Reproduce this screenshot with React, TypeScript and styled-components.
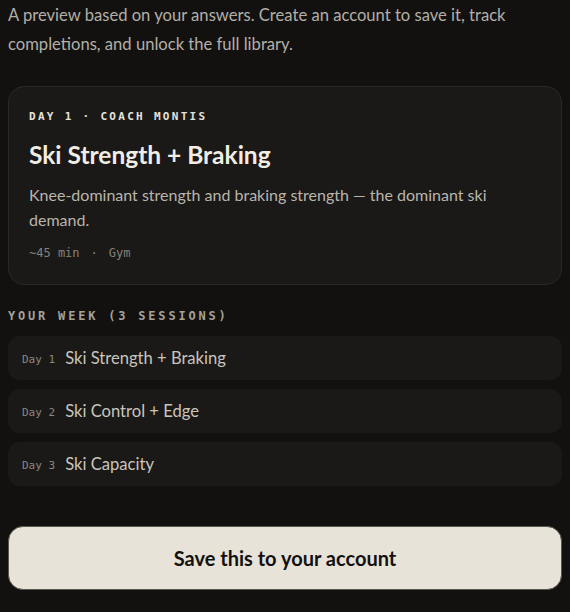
import React from "react";
import styled, { createGlobalStyle } from "styled-components";

const Global = createGlobalStyle`
  html, body { margin: 0; padding: 0; background: #121110; }
  body { font-family: Lato, "Noto Sans", sans-serif; -webkit-font-smoothing: antialiased; }
`;

const mono = `"DejaVu Sans Mono", "Liberation Mono", monospace`;

const Page = styled.main`
  width: 570px;
  box-sizing: border-box;
  padding: 1px 8px 22px;
  display: flex;
  flex-direction: column;
`;

const Intro = styled.p`
  margin: 0;
  font-size: 16.6px;
  line-height: 29px;
  color: #b3afa7;
`;

const Card = styled.section`
  margin-top: 27px;
  background: #1a1918;
  border: 1px solid #2a2826;
  border-radius: 16px;
  padding: 22px 20px 22px;
  display: flex;
  flex-direction: column;
`;

const Eyebrow = styled.div`
  font-family: ${mono};
  font-weight: 700;
  font-size: 11px;
  letter-spacing: 2.3px;
  color: #e6e2d8;
  line-height: 16px;
`;

const Title = styled.h2`
  margin: 15px 0 0;
  font-size: 24.5px;
  line-height: 30px;
  font-weight: 700;
  color: #f1ede4;
`;

const Desc = styled.p`
  margin: 12px 0 0;
  font-size: 16px;
  line-height: 25px;
  color: #b9b5ad;
`;

const Meta = styled.div`
  margin-top: 12px;
  font-family: ${mono};
  font-size: 12px;
  color: #85817a;
  display: flex;
  gap: 11px;
  line-height: 18px;
`;

const SectionLabel = styled.h3`
  margin: 22px 0 0;
  font-family: ${mono};
  font-weight: 700;
  font-size: 12px;
  letter-spacing: 2.8px;
  color: #a6a29a;
  line-height: 18px;
`;

const List = styled.ul`
  list-style: none;
  margin: 11px 0 0;
  padding: 0;
  display: flex;
  flex-direction: column;
  gap: 9px;
`;

const Row = styled.li`
  height: 44px;
  box-sizing: border-box;
  background: #1a1918;
  border-radius: 12px;
  padding: 0 14px;
  display: flex;
  align-items: center;
  gap: 10px;
`;

const DayTag = styled.span`
  font-family: ${mono};
  font-size: 11px;
  color: #8b877f;
  padding-top: 2px;
`;

const RowTitle = styled.span`
  font-size: 16.6px;
  color: #c9c5bd;
`;

const SaveButton = styled.button`
  margin-top: 40px;
  height: 64px;
  border: 1px solid #5a5750;
  border-radius: 15px;
  background: #e8e3d8;
  color: #121110;
  font-family: Lato, "Noto Sans", sans-serif;
  font-weight: 700;
  font-size: 20px;
  cursor: pointer;
`;

const sessions = [
  { day: 1, title: "Ski Strength + Braking" },
  { day: 2, title: "Ski Control + Edge" },
  { day: 3, title: "Ski Capacity" },
];

export default function App() {
  return (
    <>
      <Global />
      <Page>
        <Intro>
          A preview based on your answers. Create an account to save it, track
          completions, and unlock the full library.
        </Intro>
        <Card>
          <Eyebrow>DAY 1 · COACH MONTIS</Eyebrow>
          <Title>Ski Strength + Braking</Title>
          <Desc>
            Knee-dominant strength and braking strength — the dominant ski
            demand.
          </Desc>
          <Meta>
            <span>~45 min</span>
            <span>·</span>
            <span>Gym</span>
          </Meta>
        </Card>
        <SectionLabel>YOUR WEEK (3 SESSIONS)</SectionLabel>
        <List>
          {sessions.map((s) => (
            <Row key={s.day}>
              <DayTag>Day {s.day}</DayTag>
              <RowTitle>{s.title}</RowTitle>
            </Row>
          ))}
        </List>
        <SaveButton>Save this to your account</SaveButton>
      </Page>
    </>
  );
}
